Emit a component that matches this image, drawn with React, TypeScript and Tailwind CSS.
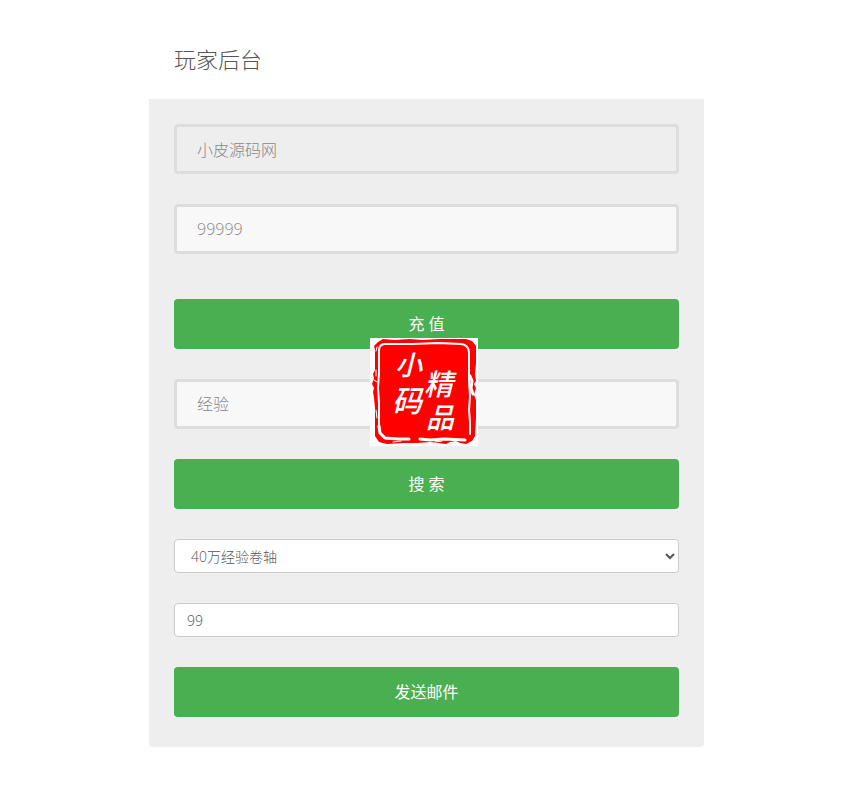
import type { InputHTMLAttributes, ReactNode } from 'react';

const LargeInput = ({ className, ...props }: InputHTMLAttributes<HTMLInputElement>) => (
  <input
    className={`block h-[50px] w-full rounded border-3 border-[#ddd] px-5 text-base font-light text-[#888] placeholder:text-[#888] placeholder:opacity-100 outline-none focus:border-[#ccc] ${className}`}
    {...props}
  />
);

const SubmitButton = ({ children }: { children: ReactNode }) => (
  <button
    type="button"
    className="block h-[50px] w-full cursor-pointer rounded bg-[#4aaf51] text-base font-normal text-white hover:opacity-80"
  >
    {children}
  </button>
);

const Seal = () => (
  <svg
    viewBox="0 0 108 108"
    className="pointer-events-none absolute -top-[41px] left-1/2 -ml-[57px] size-[108px]"
    role="img"
    aria-label="小码精品"
  >
    <rect width="108" height="108" fill="#fff" />
    <path
      d="M5 12 L4 8 L8 4 L13 1 L25 2 L40 1 L52 2 L70 1 L96 1 L102 3 L106 8 L106 25 L105 36 L106 43 L104 46 L106 50 L104 57 L106 62 L106 80 L105 98 L102 103 L96 106 L90 105 L86 103 L80 104 L76 106 L60 104 L48 105 L34 105 L17 106 L9 104 L5 98 L5 84 L5 70 L4 60 L3 54 L4 50 L2 46 L4 40 L3 36 L5 32 L5 20 Z"
      fill="#f00"
    />
    <g fill="none" stroke="#fff" strokeLinejoin="round" strokeLinecap="round">
      <path d="M9 92 L9 78 L9 65 L8 50 L9 35 L9 22 L9 12 Q9 7 14 6 L24 6 L42 6" strokeWidth="2" />
      <path d="M42 6 L68 5 L91 6 Q99 7 99 15 L99 29 L99 43 L100 58" strokeWidth="2" />
      <path d="M100 58 L99 72 L100 84 L100 96" strokeWidth="2" />
      <path d="M9 88 L10 95 L15 100 L28 101 L39 101" strokeWidth="3" />
      <path d="M50 101 L60 102 L74 101 L95 102" strokeWidth="3" />
      <path d="M100 38 L102 43 L101 50 L103 56" strokeWidth="3" />
      <path d="M6 32 L6 38 M4 42 L7 44 M6 72 L7 80" strokeWidth="1" />
      <path d="M6 13 L7 9 M23 104 L31 103 M65 104 L72 103" strokeWidth="1" />
    </g>
    <g fill="#fff" className="font-medium italic">
      <text x="25" y="37" fontSize="27">小</text>
      <text x="22" y="74" fontSize="30">码</text>
      <text x="54" y="57" fontSize="29">精</text>
      <text x="56" y="90" fontSize="28">品</text>
    </g>
  </svg>
);

const App = () => {
  return (
    <main className="py-6 pl-1 font-['Open_Sans','Noto_Sans_CJK_SC',sans-serif] font-light">
      <div className="mx-auto max-w-[555px]">
        <header className="h-[75px] px-[25px] pt-5">
          <h1 className="text-[22px] leading-[30px] text-[#555]">玩家后台</h1>
        </header>

        <form className="rounded-b bg-[#eee] px-[25px] pt-[25px] pb-[30px]">
          <LargeInput className="bg-[#eee]" aria-label="账号" defaultValue="小皮源码网" readOnly />
          <LargeInput className="mt-[30px] bg-[#f8f8f8]" aria-label="数量" defaultValue="99999" />

          <div className="mt-[45px]">
            <SubmitButton>充 值</SubmitButton>
          </div>

          <div className="relative mt-[30px]">
            <LargeInput className="bg-[#f8f8f8]" aria-label="搜索物品" placeholder="经验" />
            <Seal />
          </div>

          <div className="mt-[30px]">
            <SubmitButton>搜 索</SubmitButton>
          </div>

          <select
            aria-label="物品"
            className="mt-[30px] block h-[34px] w-full rounded border border-[#ccc] bg-white px-3 text-sm font-light text-[#555]"
          >
            <option>40万经验卷轴</option>
          </select>

          <input
            aria-label="物品数量"
            defaultValue="99"
            className="mt-[30px] block h-[34px] w-full rounded border border-[#ccc] bg-white px-3 text-sm font-light text-[#555]"
          />

          <div className="mt-[30px]">
            <SubmitButton>发送邮件</SubmitButton>
          </div>
        </form>
      </div>
    </main>
  );
};

export default App;
